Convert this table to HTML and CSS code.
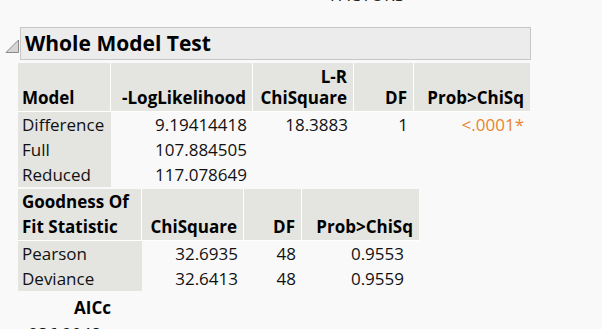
FILE: index.html
```html
<!DOCTYPE html>
<html lang="en">
<head>
    <meta charset="UTF-8">
    <title>Whole Model Test</title>
    <link rel="stylesheet" href="styles.css">
</head>
<body>
    <div class="axis-label">FACTORS</div>

    <div class="outline">
        <div class="outline-head">
            <svg class="toggle" width="15" height="16" viewBox="0 0 15 16">
                <polygon points="1,14.5 13.5,14.5 13.5,2" fill="#d6d6d6" stroke="#8a8a8a" stroke-width="1"/>
            </svg>
            <div class="outline-title">Whole Model Test</div>
        </div>

        <div class="outline-body">
            <table class="report model-table">
                <thead>
                    <tr>
                        <th class="label-col c-model">Model</th>
                        <th class="num c-loglik">-LogLikelihood</th>
                        <th class="num c-lr">L-R<br>ChiSquare</th>
                        <th class="num c-df">DF</th>
                        <th class="num c-prob last">Prob&gt;ChiSq</th>
                    </tr>
                </thead>
                <tbody>
                    <tr>
                        <td class="label-col">Difference</td>
                        <td class="num">9.19414418</td>
                        <td class="num">18.3883</td>
                        <td class="num">1</td>
                        <td class="num signif">&lt;.0001*</td>
                    </tr>
                    <tr>
                        <td class="label-col">Full</td>
                        <td class="num">107.884505</td>
                        <td></td><td></td><td></td>
                    </tr>
                    <tr>
                        <td class="label-col">Reduced</td>
                        <td class="num">117.078649</td>
                        <td></td><td></td><td></td>
                    </tr>
                </tbody>
            </table>

            <table class="report fit-table">
                <thead>
                    <tr>
                        <th class="label-col c-stat">Goodness Of<br>Fit Statistic</th>
                        <th class="num c-chisq">ChiSquare</th>
                        <th class="num c-df2">DF</th>
                        <th class="num c-prob2 last">Prob&gt;ChiSq</th>
                    </tr>
                </thead>
                <tbody>
                    <tr>
                        <td class="label-col">Pearson</td>
                        <td class="num">32.6935</td>
                        <td class="num">48</td>
                        <td class="num prob">0.9553</td>
                    </tr>
                    <tr>
                        <td class="label-col">Deviance</td>
                        <td class="num">32.6413</td>
                        <td class="num">48</td>
                        <td class="num prob">0.9559</td>
                    </tr>
                </tbody>
            </table>

            <table class="summary-table">
                <tr><th class="num">AICc</th></tr>
                <tr><td class="num">236.2048</td></tr>
            </table>
        </div>
    </div>
</body>
</html>
```

FILE: styles.css
```css
* {
    margin: 0;
    padding: 0;
    box-sizing: border-box;
}

body {
    background-color: #f9f9f9;
    color: #111;
    font-family: "Open Sans", "Noto Sans", sans-serif;
    font-size: 17px;
    overflow: hidden;
}

/* axis title of the chart above, mostly scrolled out of view */
.axis-label {
    margin-top: -17px;
    padding-left: 330px;
    height: 24px;
    line-height: 24px;
    font-size: 17px;
    color: #222;
    letter-spacing: 0.3px;
}

.outline {
    margin-top: 20px;
    padding-left: 5px;
}

.outline-head {
    display: flex;
    align-items: center;
}

.toggle {
    margin-top: 4px;
}

.outline-title {
    width: 511px;
    height: 33px;
    line-height: 30px;
    padding-left: 4px;
    border: 1px solid #c6c6c6;
    background-color: #ececec;
    font-size: 21px;
    font-weight: bold;
    color: #000;
}

.outline-body {
    padding-left: 13px;
    padding-top: 3px;
}

.report {
    border-collapse: separate;
    border-spacing: 0;
    table-layout: fixed;
}

.report th {
    background-color: #e4e4e0;
    font-weight: bold;
    color: #000;
    vertical-align: bottom;
    text-align: left;
    border-right: 1px solid #fff;
    border-bottom: 1px solid #fff;
    padding: 0 6px 2px 4px;
    white-space: nowrap;
}

.report th.last {
    border-right: none;
}

.report td {
    height: 25px;
    line-height: 25px;
    padding: 0 6px 0 4px;
    white-space: nowrap;
}

.report .num {
    text-align: right;
}

.report td.label-col {
    background-color: #e4e4e0;
}

.model-table {
    width: 512px;
}

.model-table th {
    height: 49px;
    line-height: 21px;
    padding-bottom: 3px;
}

.c-model { width: 93px; }
.c-loglik { width: 142px; }
.c-lr { width: 101px; }
.c-df { width: 60px; }
.c-prob { width: 116px; }

.signif {
    color: #e8852f;
}

.fit-table {
    width: 401px;
    margin-top: 2px;
}

.fit-table th {
    height: 51px;
    line-height: 25px;
    padding-bottom: 1px;
}

.c-stat { width: 124px; }
.c-chisq { width: 102px; }
.c-df2 { width: 58px; }
.c-prob2 { width: 117px; }

.fit-table td.prob {
    padding-right: 15px;
}

.summary-table {
    border-collapse: collapse;
    margin-top: 4px;
    width: 93px;
}

.summary-table th {
    font-weight: bold;
    color: #000;
    height: 26px;
    line-height: 26px;
    padding-right: 0;
}

.summary-table td {
    line-height: 25px;
    padding-right: 10px;
}

.summary-table .num {
    text-align: right;
}
```
